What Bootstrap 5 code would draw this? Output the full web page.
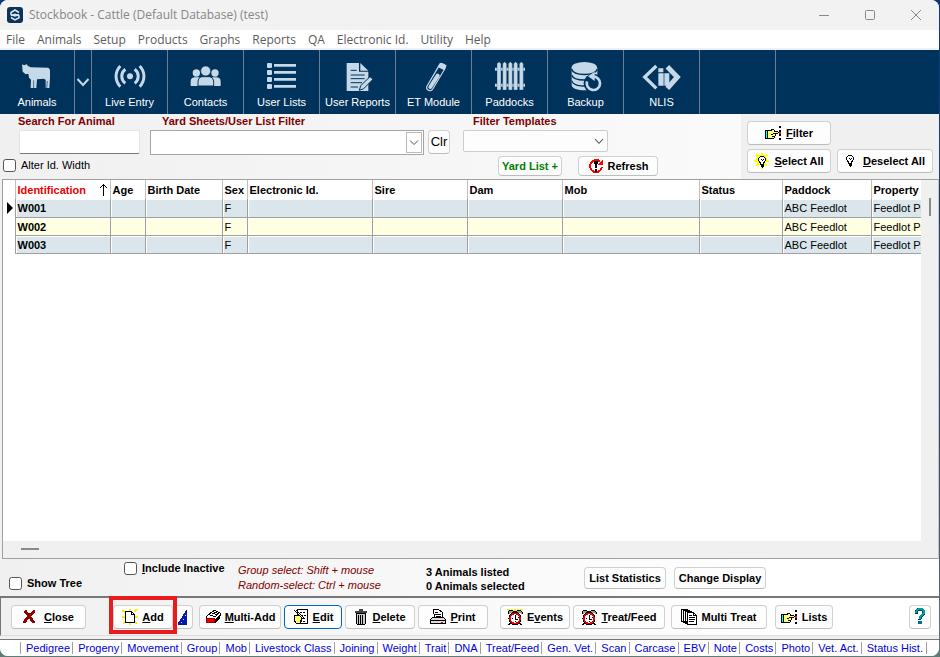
<!DOCTYPE html>
<html lang="en">
<head>
<meta charset="utf-8">
<meta name="viewport" content="width=device-width, initial-scale=1">
<title>Stockbook - Cattle</title>
<link href="https://cdn.jsdelivr.net/npm/bootstrap@5.3.0/dist/css/bootstrap.min.css" rel="stylesheet">
<style>
:root{--navy:#00335c;--ice:#c6d9e8;--face:#f0f0f0}
body{font:11px/14px "Liberation Sans",Arial,sans-serif;color:#000;background:linear-gradient(#0b3a78,#2c4a78 70%,#5d7d78)}
.desk{min-height:100vh;padding:0 1px 1px 0}
.win{background:var(--face);border-radius:8px;overflow:hidden}
.seg{font-family:"Open Sans","Noto Sans",sans-serif;font-size:12px;line-height:18px}
.titlebar{height:30px;background:#f2f2f2;color:#868686;padding:0 17px 0 7px}
.capbtns{gap:34px}
.capbtns button,.tool{border:0;background:none;padding:0}
.capbtns svg,.tool svg,.pbtn svg,.logo{display:block;flex:none}
.logo{margin-right:6px}
.pbtn svg{shape-rendering:crispEdges}
.menus{background:#fff;height:20px;padding:2px 6px 0;gap:12px;border-bottom:2px solid var(--face)}
.menus a{color:#5c5c5c}
.toolbar{background:var(--navy);height:64px}
.tool{width:76px;color:#fff;border-right:1px solid #6b8093;padding-top:11px;gap:2px}
.tool svg{fill:var(--ice);stroke:none}
.tool.first{width:75px}
.tool.drop{width:17px;padding-top:25px}
.grad{background:linear-gradient(90deg,#f0f0f0,#fdfdfd)}
.grad-full{background:linear-gradient(90deg,#f0f0f0,#fff 85%)}
.maroon{color:#800000}
.cap{font-weight:700;color:#800000;display:block;margin-bottom:2px}
.filters{height:65px}
.colA{width:150px;padding:0 10px 0 3px}
.colB{width:300px}
.colC{width:195px;margin-left:13px}
.inset{padding-left:15px}
.inset-sm{padding-left:10px}
.txt{height:24px;border:1px solid #e3e3e3;border-bottom-color:#777;border-radius:2px;padding:0 4px;font-size:11px;background:#fff;margin-left:16px;width:121px}
.combo{height:25px;border:1px solid #a5a5a5;border-radius:0;padding:0 20px 0 4px;font-size:11px;background:#fff url("data:image/svg+xml,%3Csvg xmlns='http://www.w3.org/2000/svg' width='16' height='21'%3E%3Crect x='.5' y='.5' width='15' height='20' fill='%23fdfdfd' stroke='%23bbb'/%3E%3Cpath d='M4 8.500l4 4 4-4' fill='none' stroke='%23555'/%3E%3C/svg%3E") no-repeat right 1px center/16px 21px}
.combo.flat{height:22px;width:145px;border-color:#ccc;border-radius:2px;background:#fdfdfd url("data:image/svg+xml,%3Csvg xmlns='http://www.w3.org/2000/svg' width='16' height='21'%3E%3Cpath d='M4 8.500l4 4 4-4' fill='none' stroke='%23555'/%3E%3C/svg%3E") no-repeat right 0 center/16px 21px}
.pbtn{display:inline-flex;align-items:center;justify-content:center;gap:4px;height:24px;padding:0;font-size:11px;line-height:14px;font-weight:700;color:#000;background:#fdfdfd;border:1px solid #d0d0d0;border-bottom-color:#bdbdbd;border-radius:4px;white-space:nowrap;flex:none}
.pbtn:hover{background:#eef6fc;border-color:#0078d4;color:#000}
.pbtn.low{height:20px}
.pbtn.mid{height:22px}
.pbtn.focus-on{border-color:#0067c0}
.clr{font-size:13px;font-weight:400}
.yardbtn,.yardbtn:hover{color:#008000}
.w20{width:20px}.w22{width:22px}.w58{width:58px}.w60{width:60px}.w64{width:64px}.w70{width:70px}.w75{width:75px}.w80{width:80px}.w82{width:82px}.w84{width:84px}.w92{width:92px}.w96{width:96px}
.chk{width:13px;height:13px;margin:0;border:1px solid #555;border-radius:3px;flex:none}
.tick{gap:5px}
.side{width:198px;background:var(--face);padding:7px 6px 0}
.gridbox{background:#fff;border:1px solid #a0a0a0;border-right-color:#c8c8c8;margin-left:2px}
.gridwrap{width:0}
.cattle{table-layout:fixed;width:965px;border-collapse:collapse;margin:0}
.c-mark{width:12px}.c-id{width:95px}.c-age{width:35px}.c-birth{width:77px}.c-sex{width:25px}.c-eid{width:125px}.c-par{width:95px}.c-mob{width:137px}.c-stat{width:83px}.c-pad{width:89px}.c-prop{width:97px}
.cattle th,.cattle td{padding:0 2px;height:18px;line-height:16px;white-space:nowrap;overflow:hidden;border-right:1px solid #a0a0a0;vertical-align:middle}
.cattle th{height:19px;padding-top:1px;font-weight:700;border-right-color:#c0c0c0}
.cattle th:nth-child(2){color:#f00000}
.cattle tbody td{border-bottom:1px solid #a0a0a0;background:#dae6ec;box-shadow:inset 1px 1px 0 #fff;padding-top:1px}
.cattle tbody tr.alt td{background:#ffffe1}
.cattle td.rowhead,.cattle tbody tr.alt td.rowhead{background:#fff;border-bottom:0;padding:0 0 0 4px}
.cattle td:nth-child(2){font-weight:700}
.vbar{width:17px;background:var(--face);padding-top:18px}
.vbar i{width:2px;height:18px;background:#8a8a8a;margin:0 auto}
.hbar{height:17px;background:var(--face);padding:0 0 2px 18px}
.hbar i{width:18px;height:2px;background:#8a8a8a}
.status{height:37px}
.tree{width:124px;padding:0 0 6px 9px}
.incl{width:114px;padding-top:2px;white-space:nowrap}
.hints{width:188px;line-height:15px}
.counts{width:158px;padding-top:2px}
.actions{border-top:2px solid #777;border-left:1px solid #777;border-bottom:1px solid #ddd;height:40px;padding:0 8px 0 10px}
.addgrp{margin:0 6px 0 27px}
.grp{gap:3px}
.grp-2{margin:0 6px 0 12px}
.spot{position:absolute;left:-4px;top:-9px;width:68px;height:38px;border:4px solid #e81c1c;pointer-events:none}
.links{margin-top:3px;border-top:1px solid #777;background:#fff;height:17px;padding:0 12px 0 20px}
.links a{color:#0000e0;border-left:1px solid #a0a0a0;padding-left:5px;line-height:12px;white-space:nowrap}
.links a:last-child{border-right:1px solid #a0a0a0;padding-right:3px}
</style>
<script src="https://cdn.jsdelivr.net/npm/bootstrap@5.3.0/dist/js/bootstrap.bundle.min.js"></script>
</head>
<body>
<svg class="d-none" aria-hidden="true">
  <symbol id="i-hand" viewBox="0 0 17 14">
    <path d="M1 5h1v7H1z" fill="#0ff"/><path d="M0.500 4v9M1 4.500h1.500M1 12.500h1.500" stroke="#000" fill="none"/>
    <path d="M3 5h4V4h2v1h4v2H9v2h1v1H9v1H8v1H3z" fill="#ff7"/>
    <path d="M2.500 5v7M3 4.500h3.500M6 3.500h3M9.500 4v1M9 5.500h4M13.500 6v1M8 7.500h5M6 8.500h2M10.500 8v1.500M7 10.500h3M9.500 11v1M3 12.500h6" stroke="#000" fill="none"/>
    <path d="M15 0v14" stroke="#000" stroke-width="2" stroke-dasharray="2 2"/><path d="M14 6h2v2h-2z" fill="#f00"/>
  </symbol>
  <symbol id="i-bulb" viewBox="0 0 10 14">
    <path d="M3 2h4v1h1v4H7v1H6v1H4V8H3V7H2V3h1z" fill="#fff"/>
    <path d="M3 1.500h4M2.500 2v1M7.500 2v1M1.500 3v3M8.500 3v3M2.500 6v1.500M7.500 6v1.500M3.500 7v3M6.500 7v3M4 4.500h1M5 5.500h1M6 4.500h1" stroke="#000" fill="none"/><path d="M4 9h3v3H6v1H5v-1H4z" fill="#000"/>
  </symbol>
  <symbol id="i-clock" viewBox="0 0 16 16">
    <path d="M1 5V3l2-2h2l2 2M9 3l2-2h2l2 2v2" fill="#999" stroke="#000"/><path d="M7 2h2v2H7z" fill="#000"/>
    <circle cx="8" cy="9.500" r="5" fill="#fff" stroke="#000" stroke-width="3"/><circle cx="8" cy="9.500" r="5" fill="#fff" stroke="#e00" stroke-width="1.500"/>
    <path d="M8.500 6v4h2M5 9.500h1M8.500 12v1M11 8.500h1" stroke="#000" fill="none"/><path d="M3 14l-1 2M13 14l1 2" stroke="#000" stroke-width="2"/>
  </symbol>
</svg>
<div class="desk d-flex">
<div class="win flex-grow-1 d-flex flex-column">

  <header class="titlebar seg d-flex align-items-center">
    <svg class="logo" width="16" height="16" viewBox="0 0 16 16"><rect width="16" height="16" rx="3" fill="#0b3558"/><path d="M12 5.500L8 3 4 5.500v2L8 9l4-1.500M4 8.500L8 7.200l4 1.500v2L8 13l-4-2.500" fill="none" stroke="#d9e6f2" stroke-width="1.500"/></svg>
    <span class="me-auto">Stockbook - Cattle (Default Database) (test)</span>
    <div class="capbtns d-flex align-items-center">
      <button aria-label="Minimize"><svg width="12" height="12"><path d="M1 6.500h10" stroke="#888"/></svg></button>
      <button aria-label="Maximize"><svg width="12" height="12"><rect x="1.500" y="1.500" width="9" height="9" rx="1" fill="none" stroke="#888"/></svg></button>
      <button aria-label="Close window"><svg width="12" height="12"><path d="M1 1l10 10M11 1L1 11" stroke="#888"/></svg></button>
    </div>
  </header>

  <nav class="menus seg d-flex align-items-center">
    <a href="#" class="text-decoration-none">File</a><a href="#" class="text-decoration-none">Animals</a><a href="#" class="text-decoration-none">Setup</a><a href="#" class="text-decoration-none">Products</a><a href="#" class="text-decoration-none">Graphs</a><a href="#" class="text-decoration-none">Reports</a><a href="#" class="text-decoration-none">QA</a><a href="#" class="text-decoration-none">Electronic Id.</a><a href="#" class="text-decoration-none">Utility</a><a href="#" class="text-decoration-none">Help</a>
  </nav>

  <div class="toolbar d-flex align-items-stretch">
    <button class="tool first d-flex flex-column align-items-center">
      <svg width="40" height="32" viewBox="0 0 120 96"><path d="M15 10l6 3 8-3 4 5 8 4 53 1 5 6v24l-2 31h-11l0-25-6-3-20 2-2 26-17 0 1-25-6-6-2-12-8 2-9-8-1-12z"/><path d="M50 58v24M91 60l-2 22" stroke="#00335c" stroke-width="2"/></svg>Animals</button>
    <button class="tool drop d-flex flex-column align-items-center" aria-label="More"><svg width="14" height="14" viewBox="0 0 14 14"><path d="M1.500 4L7 10l5.500-6" fill="none" stroke="#c6d9e8" stroke-width="2"/></svg></button>
    <button class="tool d-flex flex-column align-items-center">
      <svg width="40" height="32" viewBox="0 0 120 96"><circle cx="60" cy="46" r="9"/><g fill="none" stroke="#c6d9e8" stroke-width="9"><path d="M31 15a44 44 0 0 0 0 62M89 15a44 44 0 0 1 0 62M46 25a26 26 0 0 0 0 42M74 25a26 26 0 0 1 0 42"/></g></svg>Live Entry</button>
    <button class="tool d-flex flex-column align-items-center">
      <svg width="40" height="32" viewBox="0 0 120 96"><circle cx="31" cy="36" r="11"/><circle cx="87" cy="36" r="11"/><path d="M14 75V62q0-12 11-13h12q8 1 8 12v14zM74 75V61q0-11 8-12h11q11 1 11 13v13z"/><path d="M36 75V64q0-15 12-17h22q13 2 13 17v11z" stroke="#00335c" stroke-width="3"/><circle cx="59" cy="30" r="15" stroke="#00335c" stroke-width="2"/></svg>Contacts</button>
    <button class="tool d-flex flex-column align-items-center">
      <svg width="40" height="32" viewBox="0 0 120 96"><rect x="15" y="6" width="15" height="15" rx="3"/><rect x="15" y="27" width="15" height="15" rx="3"/><rect x="15" y="48" width="15" height="15" rx="3"/><rect x="15" y="69" width="15" height="15" rx="3"/><path d="M36 13h66M36 34h66M36 55h66M36 76h66" stroke="#c6d9e8" stroke-width="8"/></svg>User Lists</button>
    <button class="tool d-flex flex-column align-items-center">
      <svg width="40" height="32" viewBox="0 0 120 96"><path d="M26 6h37v26h28v58H26z"/><path d="M67 6l24 23H67z"/><path d="M38 28h18M38 42h42M38 53h42M38 65h34M38 78h22" stroke="#00335c" stroke-width="3"/><path d="M64 88l4-14 28-27 9 8-28 28z" stroke="#00335c" stroke-width="3"/></svg>User Reports</button>
    <button class="tool d-flex flex-column align-items-center">
      <svg width="40" height="32" viewBox="0 0 120 96"><g fill="none" stroke-linecap="round"><path d="M84 18L48 79" stroke="#c6d9e8" stroke-width="23"/><path d="M82 22L48 79" stroke="#00335c" stroke-width="16"/><path d="M71 44L49 78" stroke="#c6d9e8" stroke-width="12"/></g><path d="M78 5l20 8-7 15-20-10z"/></svg>ET Module</button>
    <button class="tool d-flex flex-column align-items-center">
      <svg width="40" height="32" viewBox="0 0 120 96"><path d="M15 20h90v9H15zM15 68h90v9H15z"/><path d="M21 87V8l6-6 6 6v79zM38 87V8l6-6 6 6v79zM55 87V8l6-6 6 6v79zM71 87V8l6-6 6 6v79zM88 87V8l6-6 6 6v79z" stroke="#00335c" stroke-width="1"/></svg>Paddocks</button>
    <button class="tool d-flex flex-column align-items-center">
      <svg width="40" height="32" viewBox="0 0 120 96"><path d="M17 20v52c0 10 18 16 39 16s38-6 38-16V20z"/><ellipse cx="55" cy="19" rx="38" ry="16"/><path d="M17 24c6 22 70 22 77 0M17 42c6 20 70 20 77 0M17 59c6 20 50 20 60 6" fill="none" stroke="#00335c" stroke-width="4"/><circle cx="82" cy="67" r="29" fill="#00335c"/><path d="M80 47a20 20 0 1 1-17 14" fill="none" stroke="#c6d9e8" stroke-width="8"/><path d="M66 46l20-14v28z"/></svg>Backup</button>
    <button class="tool d-flex flex-column align-items-center">
      <svg width="40" height="32" viewBox="0 0 120 96"><path d="M43 15L8 48l35 34" fill="none" stroke="#c6d9e8" stroke-width="10"/><path d="M76 17l30 31-30 34" fill="none" stroke="#c6d9e8" stroke-width="15"/><path d="M49 22h15v12H49zM49 37h16v37H49zM67 37h15v37H67z"/></svg>NLIS</button>
    <div class="tool"></div>
  </div>

  <div class="filters grad d-flex">
    <div class="colA">
      <label class="cap inset" for="q">Search For Animal</label>
      <input id="q" type="text" class="form-control txt">
      <div class="d-flex align-items-center tick pt-1"><input class="form-check-input chk" type="checkbox" id="alter"><label for="alter">Alter Id. Width</label></div>
    </div>
    <div class="colB">
      <label class="cap ps-2 ms-1" for="yard">Yard Sheets/User List Filter</label>
      <div class="d-flex gap-1"><select id="yard" class="form-select combo"><option></option></select><button class="btn pbtn w22 clr">Clr</button></div>
    </div>
    <div class="colC">
      <label class="cap inset-sm" for="tmpl">Filter Templates</label>
      <select id="tmpl" class="form-select combo flat"><option></option></select>
      <div class="d-flex justify-content-end gap-3 pt-1">
        <button class="btn pbtn low w64 yardbtn">Yard List +</button>
        <button class="btn pbtn low w80"><svg width="16" height="16" viewBox="0 0 16 16"><path d="M12 3.500A6 6 0 1 0 14 9" fill="none" stroke="#f00" stroke-width="2"/><path d="M15 1v6H9z" fill="#f00"/><path d="M6 3h4v3H9v4H7V6H6zM7 11h2v3H7z"/></svg>Refresh</button>
      </div>
    </div>
    <div class="side ms-auto">
      <button class="btn pbtn w84 mb-1"><svg width="17" height="14"><use href="#i-hand"/></svg><span><u>F</u>ilter</span></button>
      <div class="d-flex justify-content-between">
        <button class="btn pbtn w84"><svg width="16" height="16" viewBox="0 0 16 16"><path d="M7.500 0v2M7.500 14v2M0 7.500h2M13 7.500h2M2 2l2 2M13 2l-2 2M2 13l2-2M13 13l-2-2" stroke="#ff0" stroke-width="2"/><circle cx="7.500" cy="7" r="5.500" fill="#ff0"/><svg x="3" y="2" width="10" height="14"><use href="#i-bulb"/></svg></svg><span><u>S</u>elect All</span></button>
        <button class="btn pbtn w96"><svg width="10" height="14"><use href="#i-bulb"/></svg><span class="ps-1"><u>D</u>eselect All</span></button>
      </div>
    </div>
  </div>

  <main class="gridbox flex-grow-1 d-flex flex-column">
    <div class="flex-grow-1 d-flex">
      <div class="gridwrap flex-grow-1 overflow-hidden">
        <table class="cattle">
          <colgroup><col class="c-mark"><col class="c-id"><col class="c-age"><col class="c-birth"><col class="c-sex"><col class="c-eid"><col class="c-par"><col class="c-par"><col class="c-mob"><col class="c-stat"><col class="c-pad"><col class="c-prop"></colgroup>
          <thead><tr><th></th><th><span class="d-flex justify-content-between align-items-center">Identification<svg width="9" height="12"><path d="M4.500 0v12M1 4l3.500-3.500L8 4" fill="none" stroke="#000"/></svg></span></th><th>Age</th><th>Birth Date</th><th>Sex</th><th>Electronic Id.</th><th>Sire</th><th>Dam</th><th>Mob</th><th>Status</th><th>Paddock</th><th>Property</th></tr></thead>
          <tbody>
            <tr><td class="rowhead"><svg width="6" height="12" class="d-block"><path d="M0 0l6 6-6 6z"/></svg></td><td>W001</td><td></td><td></td><td>F</td><td></td><td></td><td></td><td></td><td></td><td>ABC Feedlot</td><td>Feedlot Property</td></tr>
            <tr class="alt"><td class="rowhead"></td><td>W002</td><td></td><td></td><td>F</td><td></td><td></td><td></td><td></td><td></td><td>ABC Feedlot</td><td>Feedlot Property</td></tr>
            <tr><td class="rowhead"></td><td>W003</td><td></td><td></td><td>F</td><td></td><td></td><td></td><td></td><td></td><td>ABC Feedlot</td><td>Feedlot Property</td></tr>
          </tbody>
        </table>
      </div>
      <div class="vbar"><i class="d-block"></i></div>
    </div>
    <div class="hbar d-flex align-items-center"><i></i></div>
  </main>

  <div class="status grad-full d-flex align-items-center fw-bold">
    <div class="tree tick d-flex align-items-center align-self-end"><input class="form-check-input chk" type="checkbox" id="tree"><label for="tree">Show Tree</label></div>
    <div class="incl tick d-flex align-items-center align-self-start"><input class="form-check-input chk" type="checkbox" id="inact"><label for="inact"><u>I</u>nclude Inactive</label></div>
    <div class="hints maroon fst-italic fw-normal">Group select: Shift + mouse<br>Random-select: Ctrl + mouse</div>
    <div class="counts">3 Animals listed<br>0 Animals selected</div>
    <div class="d-flex gap-2"><button class="btn pbtn mid w82">List Statistics</button><button class="btn pbtn mid w92">Change Display</button></div>
  </div>

  <div class="actions grad-full d-flex align-items-center">
    <button class="btn pbtn w75"><svg width="13" height="14" viewBox="0 0 13 14"><path d="M2 1c3 3 6 8 9 12M12 1C7 4 4 8 1 13" stroke="#900000" stroke-width="3" fill="none"/></svg><span class="ps-1"><u>C</u>lose</span></button>
    <div class="addgrp position-relative d-flex">
      <button class="btn pbtn w60"><svg width="16" height="16" viewBox="0 0 16 16"><path d="M0 1l4 3M0 8h3M1 15l3-3M8 0v2M15 0l-3 3M16 8h-3M15 15l-2-2M8 14v2" stroke="#fe0" stroke-width="2"/><path d="M3.500 2.500h6l3 3v8h-9z" fill="#fff" stroke="#000"/><path d="M9.500 2.500v3h3" fill="none" stroke="#000"/></svg><span><u>A</u>dd</span></button>
      <button class="btn pbtn w20 border-start-0 rounded-start-0" aria-label="Add wizard"><svg width="10" height="16" viewBox="0 0 10 16"><path d="M9 0v16H0v-2z" fill="#0018b8"/><path d="M5 10h1M7 6h1M3 13h1" stroke="#ff0"/></svg></button>
      <span class="spot"></span>
    </div>
    <div class="grp d-flex">
      <button class="btn pbtn w82"><svg width="16" height="15" viewBox="0 0 16 15"><path d="M1 8l3-3 3-2 2-2 6 3v3l-4 4H1z" fill="#fff" stroke="#000"/><path d="M3 5l7 3 3-3M5 3l7 3M7 2l7 3" stroke="#000" fill="none"/><path d="M1.500 9.500h8v4h-8z" fill="#e00" stroke="#900"/><path d="M10 14l5-5V6l-5 4z" fill="#000"/></svg><span><u>M</u>ulti-Add</span></button>
      <button class="btn pbtn w58 focus-on"><svg width="16" height="16" viewBox="0 0 16 16"><path d="M4.500 .500h10v14h-10z" fill="#fff" stroke="#000"/><path d="M7 3h6M8 6h5M10 9h3M7 12.500h6" stroke="#000" stroke-dasharray="2 1"/><path d="M1 6h5l3 3-2 5H3l-2-3z" fill="#ff6" stroke="#000"/><path d="M1 1l9 9M3 1l8 8" stroke="#000"/></svg><span><u>E</u>dit</span></button>
      <button class="btn pbtn w70"><svg width="14" height="16" viewBox="0 0 14 16"><path d="M5 0h4v2H5zM1 2h12v2H1z" fill="#444"/><path d="M2.500 4.500h9v10l-1 1h-7l-1-1z" fill="#ccc" stroke="#000"/><path d="M4.500 6v9M6.500 6v9M8.500 6v9" stroke="#000"/></svg><span><u>D</u>elete</span></button>
      <button class="btn pbtn w70"><svg width="16" height="16" viewBox="0 0 16 16"><path d="M4.500 8.500l-1-8h5l4 3v5" fill="#fff" stroke="#000"/><path d="M5 3.500h3M5 5.500h6M6 7.500h5" stroke="#000"/><path d="M2.500 8.500h11l2 2v4H.5v-4z" fill="#ddd" stroke="#000"/><path d="M1 11.500h14" stroke="#000"/><path d="M11 13.500h2" stroke="#e00"/></svg><span><u>P</u>rint</span></button>
    </div>
    <div class="grp grp-2 d-flex">
      <button class="btn pbtn w70"><svg width="16" height="16" viewBox="0 0 16 16"><path d="M1 0l3 4M5 0l1 3M8 0v3M11 0l-1 3M15 0l-3 4" stroke="#fe0" stroke-width="2"/><use href="#i-clock" width="16" height="16"/></svg><span>E<u>v</u>ents</span></button>
      <button class="btn pbtn w92"><svg width="16" height="16"><use href="#i-clock"/></svg><span><u>T</u>reat/Feed</span></button>
    </div>
    <div class="d-flex gap-2">
      <button class="btn pbtn w96"><svg width="16" height="16" viewBox="0 0 16 16"><path d="M.5 .500h6v12h-6zM2.500 1.500h6v12h-6zM4.500 2.500h6v12h-6z" fill="#fff" stroke="#000"/><path d="M6.500 3.500h6l3 3v9h-9z" fill="#fff" stroke="#000"/><path d="M8 6.500h3M8 8.500h6M8 10.500h6M8 12.500h5M12.500 3.500v3h3" fill="none" stroke="#000"/></svg><span>Multi Treat</span></button>
      <button class="btn pbtn w58"><svg width="17" height="14"><use href="#i-hand"/></svg><span>Lists</span></button>
    </div>
    <button class="btn pbtn w22 ms-auto" aria-label="Help"><svg width="12" height="17" viewBox="0 0 12 17"><path d="M2 6V4q1-2.500 4-2.500 4 0 4 3 0 2-2.500 3.500Q6 9 6 11.500" fill="none" stroke="#003c60" stroke-width="3"/><path d="M2 5V4q1-3 4-3 4 0 4 3 0 2-2.500 3.500Q6 8.500 6 11" fill="none" stroke="#00a0a0" stroke-width="2"/><path d="M4 13h4v3H4z" fill="#00708a"/></svg></button>
  </div>

  <nav class="links d-flex align-items-center justify-content-between">
    <a href="#" class="text-decoration-none">Pedigree</a><a href="#" class="text-decoration-none">Progeny</a><a href="#" class="text-decoration-none">Movement</a><a href="#" class="text-decoration-none">Group</a><a href="#" class="text-decoration-none">Mob</a><a href="#" class="text-decoration-none">Livestock Class</a><a href="#" class="text-decoration-none">Joining</a><a href="#" class="text-decoration-none">Weight</a><a href="#" class="text-decoration-none">Trait</a><a href="#" class="text-decoration-none">DNA</a><a href="#" class="text-decoration-none">Treat/Feed</a><a href="#" class="text-decoration-none">Gen. Vet.</a><a href="#" class="text-decoration-none">Scan</a><a href="#" class="text-decoration-none">Carcase</a><a href="#" class="text-decoration-none">EBV</a><a href="#" class="text-decoration-none">Note</a><a href="#" class="text-decoration-none">Costs</a><a href="#" class="text-decoration-none">Photo</a><a href="#" class="text-decoration-none">Vet. Act.</a><a href="#" class="text-decoration-none">Status Hist.</a>
  </nav>
</div>
</div>
</body>
</html>
